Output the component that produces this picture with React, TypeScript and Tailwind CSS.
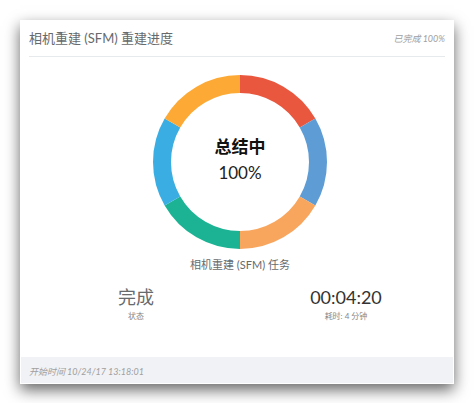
import React from "react";

type Segment = { color: string };

const segments: Segment[] = [
  { color: "#e9573f" },
  { color: "#5d9cd4" },
  { color: "#f8a55e" },
  { color: "#1bb394" },
  { color: "#3aaee3" },
  { color: "#fcaa35" },
];

function arcPath(cx: number, cy: number, r: number, start: number, end: number) {
  const toXY = (deg: number) => {
    const rad = ((deg - 90) * Math.PI) / 180;
    return [cx + r * Math.cos(rad), cy + r * Math.sin(rad)];
  };
  const [x1, y1] = toXY(start);
  const [x2, y2] = toXY(end);
  return `M ${x1} ${y1} A ${r} ${r} 0 0 1 ${x2} ${y2}`;
}

function Donut() {
  const step = 360 / segments.length;
  return (
    <svg width="178" height="178" viewBox="0 0 178 178">
      {segments.map((s, i) => (
        <path
          key={i}
          d={arcPath(89, 89, 78, i * step, (i + 1) * step)}
          stroke={s.color}
          strokeWidth="18"
          fill="none"
        />
      ))}
    </svg>
  );
}

export default function App() {
  return (
    <div className="min-h-[403px] w-[474px] bg-white pl-[20px] pt-[20px] font-['Lato','Noto_Sans_CJK_SC',sans-serif]">
      <div className="flex h-[364px] w-[434px] flex-col border border-white bg-white shadow-[0_6px_14px_rgba(0,0,0,0.6)]">
        <div className="px-[8px]">
          <div className="flex h-[36px] items-center justify-between border-b border-[#e7eaec]">
            <span className="text-[13px] text-[#676a6c]">相机重建 (SFM) 重建进度</span>
            <span className="text-[9px] italic text-[#a0a0a0]">已完成 100%</span>
          </div>
        </div>

        <div className="flex flex-col items-center pl-[6px]">
          <div className="relative mt-[16px] h-[178px] w-[178px]">
            <Donut />
            <div className="absolute inset-0 flex flex-col items-center justify-center pb-[4px]">
              <span className="text-[17px] font-bold leading-[22px] text-[#111]">总结中</span>
              <span className="mt-[4px] text-[17px] leading-[22px] text-[#222]">100%</span>
            </div>
          </div>

          <div className="mt-[7px] text-center text-[11px] leading-[14px] text-[#676a6c]">
            相机重建 (SFM) 任务
          </div>
        </div>

        <div className="mt-[14px] flex pl-[10px]">
          <div className="flex w-[210px] flex-col items-center">
            <span className="text-[18px] leading-[22px] text-[#676a6c]">完成</span>
            <span className="mt-[2px] text-[8px] text-[#888]">状态</span>
          </div>
          <div className="flex w-[210px] flex-col items-center">
            <span className="text-[18px] leading-[22px] text-[#333]">00:04:20</span>
            <span className="mt-[2px] text-[8px] text-[#888]">耗时: 4 分钟</span>
          </div>
        </div>

        <div className="mt-auto flex h-[26px] items-center bg-[#f1f2f5] px-[8px] pt-[4px]">
          <span className="text-[9px] italic text-[#a0a0a0]">开始时间 10/24/17 13:18:01</span>
        </div>
      </div>
    </div>
  );
}
